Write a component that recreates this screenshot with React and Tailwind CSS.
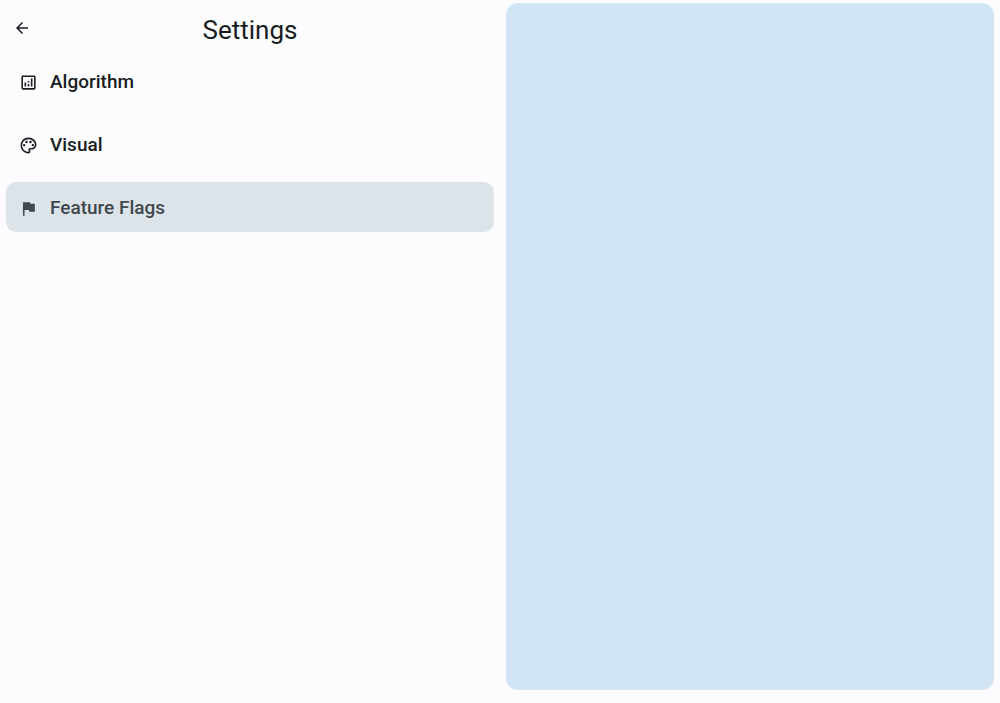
import React, { useState } from "react";
import {
  MdArrowBack,
  MdFlag,
  MdOutlineAnalytics,
  MdOutlinePalette,
} from "react-icons/md";

const sections = [
  { name: "Algorithm", Icon: MdOutlineAnalytics },
  { name: "Visual", Icon: MdOutlinePalette },
  { name: "Feature Flags", Icon: MdFlag },
];

export default function App() {
  const [active, setActive] = useState("Feature Flags");

  return (
    <div className="grid min-h-screen grid-cols-2 bg-[#fcfcff] font-['Roboto',sans-serif] text-[#191c1e]">
      <div className="px-1.5">
        <header className="grid h-14 grid-cols-[32px_1fr_32px] items-center">
          <button
            type="button"
            aria-label="Back"
            className="flex size-8 items-center justify-center rounded-full"
          >
            <MdArrowBack className="size-[18px]" />
          </button>
          <h1 className="pt-1 text-center text-[26px] leading-8">Settings</h1>
        </header>
        <nav aria-label="Settings sections" className="flex flex-col gap-[13px]">
          {sections.map(({ name, Icon }) => (
            <button
              key={name}
              type="button"
              aria-current={active === name ? "page" : undefined}
              onClick={() => setActive(name)}
              className={`flex h-[50px] w-full items-center gap-3 rounded-[10px] px-[13px] pt-0.5 text-left text-[19px] leading-6 font-medium ${
                active === name ? "bg-[#dce3e9] text-[#41484d]" : ""
              }`}
            >
              <Icon className="size-[19px]" />
              {name}
            </button>
          ))}
        </nav>
      </div>
      <main className="mx-1.5 mt-[3px] mb-[13px] rounded-xl bg-[#d2e5f4]" />
    </div>
  );
}
